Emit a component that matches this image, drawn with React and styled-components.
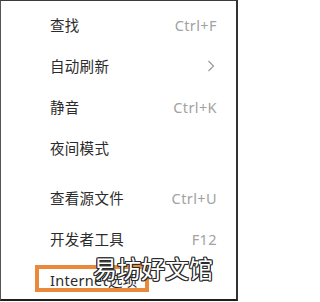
import React from 'react';
import styled, { createGlobalStyle } from 'styled-components';

const GlobalStyle = createGlobalStyle`
  html, body {
    margin: 0;
    padding: 0;
    background: #fff;
  }
  body {
    font-family: "Noto Sans", "Noto Sans CJK SC", sans-serif;
  }
`;

const menuTop = [
  { label: '查找', hint: 'Ctrl+F' },
  { label: '自动刷新', sub: true },
  { label: '静音', hint: 'Ctrl+K' },
  { label: '夜间模式' },
];

const menuBottom = [
  { label: '查看源文件', hint: 'Ctrl+U' },
  { label: '开发者工具', hint: 'F12' },
  { label: 'Internet选项' },
];

const Chevron = () => (
  <svg width="8" height="12" viewBox="0 0 8 12">
    <path d="M1.5 1 L6.5 6 L1.5 11" fill="none" stroke="#9a9a9a" strokeWidth="1.2" />
  </svg>
);

const App = () => {
  return (
    <>
      <GlobalStyle />
      <Frame>
        <Group>
          {menuTop.map((item) => (
            <Item key={item.label}>
              <Label>{item.label}</Label>
              {item.hint && <Hint>{item.hint}</Hint>}
              {item.sub && <Arrow><Chevron /></Arrow>}
            </Item>
          ))}
        </Group>
        <Divider />
        <Group>
          {menuBottom.map((item) => (
            <Item key={item.label}>
              <Label>{item.label}</Label>
              {item.hint && <Hint>{item.hint}</Hint>}
            </Item>
          ))}
        </Group>
        <Highlight />
        <Watermark>易坊好文馆</Watermark>
      </Frame>
    </>
  );
};

const Frame = styled.div`
  position: relative;
  box-sizing: border-box;
  width: 238px;
  height: 301px;
  padding-top: 3px;
  overflow: hidden;
  background: #fff;
  border-top: 1px solid #3a3a3a;
  border-left: 1px solid #555;
  border-right: 2px solid #333;
  border-bottom: 2px solid #1e1e1e;
  display: flex;
  flex-direction: column;
`;

const Group = styled.div`
  display: flex;
  flex-direction: column;
`;

const Item = styled.div`
  height: 41px;
  display: flex;
  align-items: center;
  justify-content: space-between;
  padding: 0 19px 0 49px;
`;

const Label = styled.span`
  font-size: 14.5px;
  color: #2b2b2b;
  letter-spacing: 0.3px;
`;

const Hint = styled.span`
  font-size: 14.5px;
  color: #a2a2a2;
  letter-spacing: 0.4px;
`;

const Arrow = styled.span`
  display: flex;
  align-items: center;
  padding-right: 2px;
`;

const Divider = styled.div`
  height: 1px;
  background: #e6e6e6;
  margin: 4px 0 5px;
`;

const Highlight = styled.div`
  position: absolute;
  left: 34px;
  top: 264px;
  width: 114px;
  height: 27px;
  box-sizing: border-box;
  border: 4px solid #e8893b;
`;

const Watermark = styled.div`
  position: absolute;
  left: 92px;
  top: 252px;
  font-family: "Noto Sans CJK SC", sans-serif;
  font-size: 24px;
  line-height: 30px;
  color: #fff;
  letter-spacing: 0px;
  text-shadow:
    1px 0 0 #2a2a2a, -1px 0 0 #2a2a2a, 0 1px 0 #2a2a2a, 0 -1px 0 #2a2a2a,
    1px 1px 0 #2a2a2a, -1px -1px 0 #2a2a2a, 1px -1px 0 #2a2a2a, -1px 1px 0 #2a2a2a;
`;

export default App;
